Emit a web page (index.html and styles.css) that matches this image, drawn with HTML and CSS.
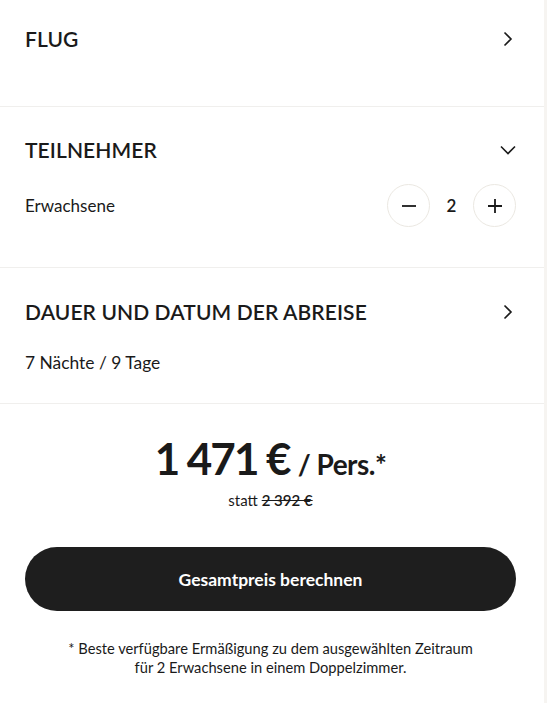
FILE: index.html
```html
<!DOCTYPE html>
<html lang="de">
<head>
    <meta charset="UTF-8">
    <meta name="viewport" content="width=device-width, initial-scale=1.0">
    <title>Reise buchen</title>
    <link rel="stylesheet" href="styles.css">
</head>
<body>
    <div class="panel">
        <section class="block block-flight">
            <div class="block-head">
                <h2>FLUG</h2>
                <svg class="chevron" width="16" height="16" viewBox="0 0 16 16"><path d="M4.5 1.5 L11 8 L4.5 14.5" fill="none" stroke="#1a1a1a" stroke-width="1.6"/></svg>
            </div>
        </section>

        <section class="block block-people">
            <div class="block-head">
                <h2>TEILNEHMER</h2>
                <svg class="chevron" width="16" height="16" viewBox="0 0 16 16"><path d="M1 4.5 L8 11.5 L15 4.5" fill="none" stroke="#1a1a1a" stroke-width="1.6"/></svg>
            </div>
            <div class="counter-row">
                <span class="label">Erwachsene</span>
                <div class="counter">
                    <button class="round" aria-label="weniger">
                        <svg width="16" height="16" viewBox="0 0 16 16"><path d="M1 8 H15" stroke="#1a1a1a" stroke-width="1.8"/></svg>
                    </button>
                    <span class="count">2</span>
                    <button class="round" aria-label="mehr">
                        <svg width="16" height="16" viewBox="0 0 16 16"><path d="M1 8 H15 M8 1 V15" stroke="#1a1a1a" stroke-width="1.8"/></svg>
                    </button>
                </div>
            </div>
        </section>

        <section class="block block-dates">
            <div class="block-head">
                <h2>DAUER UND DATUM DER ABREISE</h2>
                <svg class="chevron" width="16" height="16" viewBox="0 0 16 16"><path d="M4.5 1.5 L11 8 L4.5 14.5" fill="none" stroke="#1a1a1a" stroke-width="1.6"/></svg>
            </div>
            <p class="sub">7 Nächte / 9 Tage</p>
        </section>

        <section class="summary">
            <div class="price">
                <span class="amount">1 471 €</span>
                <span class="per">/ Pers.*</span>
            </div>
            <p class="old">statt <s>2 392 €</s></p>
            <button class="cta">Gesamtpreis berechnen</button>
            <p class="note">* Beste verfügbare Ermäßigung zu dem ausgewählten Zeitraum<br>für 2 Erwachsene in einem Doppelzimmer.</p>
        </section>
    </div>
</body>
</html>
```

FILE: styles.css
```css
body {
    margin: 0;
    padding: 0;
    background-color: #f6f4f1;
    font-family: Lato, "Noto Sans", sans-serif;
    color: #1a1a1a;
}

.panel {
    width: 544px;
    min-height: 703px;
    background-color: #fff;
}

.block {
    padding: 0 28px 0 25px;
    border-bottom: 1px solid #f0efed;
}

.block-head {
    display: flex;
    justify-content: space-between;
    align-items: center;
}

.block-head h2 {
    margin: 0;
    font-size: 21px;
    font-weight: 600;
    line-height: 26px;
    letter-spacing: 0.1px;
}

.chevron {
    display: block;
}

.block-flight {
    padding-top: 26px;
    padding-bottom: 54px;
}

.block-people {
    padding-top: 30px;
    padding-bottom: 40px;
}

.counter-row {
    margin-top: 21px;
    display: flex;
    justify-content: space-between;
    align-items: center;
}

.label {
    font-size: 17px;
}

.counter {
    display: flex;
    align-items: center;
}

.round {
    width: 43px;
    height: 43px;
    border-radius: 50%;
    border: 1px solid #ebe8e2;
    background: #fff;
    padding: 0;
    display: flex;
    justify-content: center;
    align-items: center;
}

.count {
    width: 43px;
    text-align: center;
    font-size: 17px;
    font-weight: 600;
}

.block-dates {
    padding-top: 31px;
    padding-bottom: 29px;
}

.sub {
    margin: 27px 0 0;
    font-size: 17.4px;
    line-height: 22px;
}

.summary {
    padding: 29px 28px 0 25px;
    text-align: center;
}

.price {
    display: flex;
    justify-content: center;
    align-items: baseline;
    gap: 8px;
    line-height: 50px;
}

.amount {
    font-size: 44px;
    font-weight: 700;
    letter-spacing: -2px;
}

.per {
    font-size: 28px;
    font-weight: 700;
    letter-spacing: -0.5px;
}

.old {
    margin: 2px 0 0;
    font-size: 15px;
}

.old s {
    font-weight: 600;
}

.cta {
    display: block;
    width: 100%;
    height: 64px;
    margin-top: 38px;
    border: none;
    border-radius: 32px;
    background-color: #1e1e1e;
    color: #fff;
    font-family: inherit;
    font-size: 17.5px;
    font-weight: 700;
}

.note {
    margin: 28px 0 0;
    font-size: 14.7px;
    line-height: 19px;
}
```
